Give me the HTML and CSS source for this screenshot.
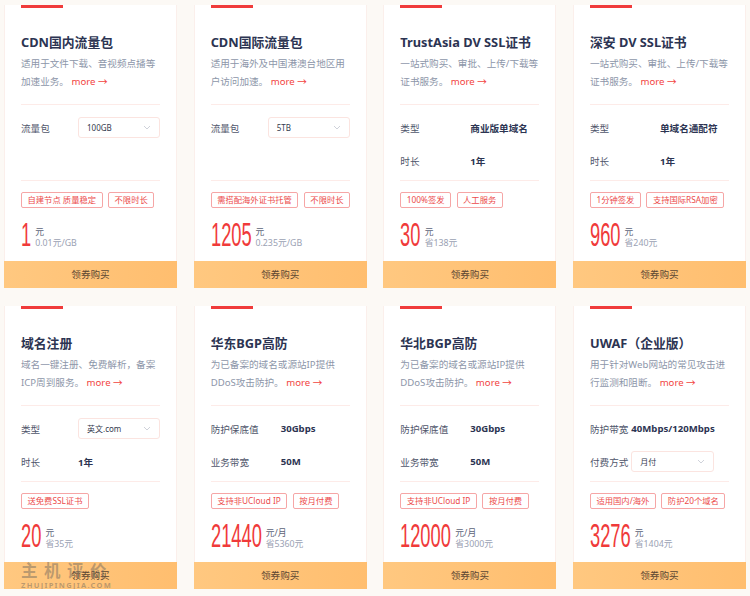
FILE: index.html
```html
<!DOCTYPE html>
<html lang="zh-CN">
<head>
    <meta charset="UTF-8">
    <meta name="viewport" content="width=device-width, initial-scale=1.0">
    <title>热门产品</title>
    <link rel="stylesheet" href="styles.css">
</head>
<body>
    <div class="products">
        <div class="card">
            <div class="card-bar"></div>
            <h3>CDN国内流量包</h3>
            <p class="desc">适用于文件下载、音视频点播等加速业务。 <a class="more" href="#">more →</a></p>
            <div class="params params-select">
                <div class="row"><span class="label">流量包</span><span class="select">100GB<svg width="8" height="5" viewBox="0 0 8 5"><polyline points="1,1 4,4 7,1" fill="none" stroke="#cfd2da" stroke-width="1"/></svg></span></div>
            </div>
            <div class="tags"><span class="tag">自建节点 质量稳定</span><span class="tag">不限时长</span></div>
            <div class="price"><span class="num" style="--n:1"><span>1</span></span><span class="unit"><span>元</span><span class="sub">0.01元/GB</span></span></div>
            <a class="buy" href="#">领券购买</a>
        </div>

        <div class="card">
            <div class="card-bar"></div>
            <h3>CDN国际流量包</h3>
            <p class="desc">适用于海外及中国港澳台地区用户访问加速。 <a class="more" href="#">more →</a></p>
            <div class="params params-select">
                <div class="row"><span class="label">流量包</span><span class="select">5TB<svg width="8" height="5" viewBox="0 0 8 5"><polyline points="1,1 4,4 7,1" fill="none" stroke="#cfd2da" stroke-width="1"/></svg></span></div>
            </div>
            <div class="tags"><span class="tag">需搭配海外证书托管</span><span class="tag">不限时长</span></div>
            <div class="price"><span class="num" style="--n:4"><span>1205</span></span><span class="unit"><span>元</span><span class="sub">0.235元/GB</span></span></div>
            <a class="buy" href="#">领券购买</a>
        </div>

        <div class="card">
            <div class="card-bar"></div>
            <h3>TrustAsia DV SSL证书</h3>
            <p class="desc">一站式购买、审批、上传/下载等证书服务。 <a class="more" href="#">more →</a></p>
            <div class="params">
                <div class="row"><span class="label">类型</span><span class="val">商业版单域名</span></div>
                <div class="row"><span class="label">时长</span><span class="val">1年</span></div>
            </div>
            <div class="tags"><span class="tag">100%签发</span><span class="tag">人工服务</span></div>
            <div class="price"><span class="num" style="--n:2"><span>30</span></span><span class="unit"><span>元</span><span class="sub">省138元</span></span></div>
            <a class="buy" href="#">领券购买</a>
        </div>

        <div class="card">
            <div class="card-bar"></div>
            <h3>深安 DV SSL证书</h3>
            <p class="desc">一站式购买、审批、上传/下载等证书服务。 <a class="more" href="#">more →</a></p>
            <div class="params">
                <div class="row"><span class="label">类型</span><span class="val">单域名通配符</span></div>
                <div class="row"><span class="label">时长</span><span class="val">1年</span></div>
            </div>
            <div class="tags"><span class="tag">1分钟签发</span><span class="tag">支持国际RSA加密</span></div>
            <div class="price"><span class="num" style="--n:3"><span>960</span></span><span class="unit"><span>元</span><span class="sub">省240元</span></span></div>
            <a class="buy" href="#">领券购买</a>
        </div>

        <div class="card">
            <div class="card-bar"></div>
            <h3>域名注册</h3>
            <p class="desc">域名一键注册、免费解析，备案ICP周到服务。 <a class="more" href="#">more →</a></p>
            <div class="params params-select">
                <div class="row"><span class="label">类型</span><span class="select">英文.com<svg width="8" height="5" viewBox="0 0 8 5"><polyline points="1,1 4,4 7,1" fill="none" stroke="#cfd2da" stroke-width="1"/></svg></span></div>
                <div class="row"><span class="label">时长</span><span class="val">1年</span></div>
            </div>
            <div class="tags"><span class="tag">送免费SSL证书</span></div>
            <div class="price"><span class="num" style="--n:2"><span>20</span></span><span class="unit"><span>元</span><span class="sub">省35元</span></span></div>
            <a class="buy" href="#">领券购买</a>
        </div>

        <div class="card">
            <div class="card-bar"></div>
            <h3>华东BGP高防</h3>
            <p class="desc">为已备案的域名或源站IP提供DDoS攻击防护。 <a class="more" href="#">more →</a></p>
            <div class="params">
                <div class="row"><span class="label">防护保底值</span><span class="val">30Gbps</span></div>
                <div class="row"><span class="label">业务带宽</span><span class="val">50M</span></div>
            </div>
            <div class="tags"><span class="tag">支持非UCloud IP</span><span class="tag">按月付费</span></div>
            <div class="price"><span class="num" style="--n:5"><span>21440</span></span><span class="unit"><span>元/月</span><span class="sub">省5360元</span></span></div>
            <a class="buy" href="#">领券购买</a>
        </div>

        <div class="card">
            <div class="card-bar"></div>
            <h3>华北BGP高防</h3>
            <p class="desc">为已备案的域名或源站IP提供DDoS攻击防护。 <a class="more" href="#">more →</a></p>
            <div class="params">
                <div class="row"><span class="label">防护保底值</span><span class="val">30Gbps</span></div>
                <div class="row"><span class="label">业务带宽</span><span class="val">50M</span></div>
            </div>
            <div class="tags"><span class="tag">支持非UCloud IP</span><span class="tag">按月付费</span></div>
            <div class="price"><span class="num" style="--n:5"><span>12000</span></span><span class="unit"><span>元/月</span><span class="sub">省3000元</span></span></div>
            <a class="buy" href="#">领券购买</a>
        </div>

        <div class="card">
            <div class="card-bar"></div>
            <h3>UWAF（企业版）</h3>
            <p class="desc">用于针对Web网站的常见攻击进行监测和阻断。 <a class="more" href="#">more →</a></p>
            <div class="params params-auto">
                <div class="row"><span class="label">防护带宽</span><span class="val">40Mbps/120Mbps</span></div>
                <div class="row"><span class="label">付费方式</span><span class="select">月付<svg width="8" height="5" viewBox="0 0 8 5"><polyline points="1,1 4,4 7,1" fill="none" stroke="#cfd2da" stroke-width="1"/></svg></span></div>
            </div>
            <div class="tags"><span class="tag">适用国内/海外</span><span class="tag">防护20个域名</span></div>
            <div class="price"><span class="num" style="--n:4"><span>3276</span></span><span class="unit"><span>元</span><span class="sub">省1404元</span></span></div>
            <a class="buy" href="#">领券购买</a>
        </div>
    </div>

    <div class="watermark">
        <span class="wm-cn">主机评价</span>
        <span class="wm-en">ZHUJIPINGJIA.COM</span>
    </div>
</body>
</html>
```

FILE: styles.css
```css
body {
    margin: 0;
    font-family: "Noto Sans", "Noto Sans CJK SC", sans-serif;
    background: #fcf9f5;
    color: #2c3452;
    position: relative;
}
.products {
    display: grid;
    grid-template-columns: repeat(4, 173px);
    column-gap: 16.67px;
    row-gap: 18px;
    padding: 5px 0 0 4px;
}
.card {
    height: 283px;
    box-sizing: border-box;
    background: #fff;
    border: 1px solid #fbefeb;
    border-top: none;
    padding: 0 16px;
    display: flex;
    flex-direction: column;
}
.card-bar {
    width: 42px;
    height: 3px;
    background: #f03b3b;
}
.card h3 {
    margin: 25px 0 0;
    font-size: 12.8px;
    line-height: 18px;
    font-weight: 700;
    color: #2c3452;
    white-space: nowrap;
}
.desc {
    margin: 4px -4px 0 0;
    height: 36px;
    font-size: 9.6px;
    line-height: 18px;
    color: #8d96a9;
}
.more {
    color: #f2443f;
    text-decoration: none;
}
.params {
    margin-top: 13px;
    height: 77px;
    box-sizing: border-box;
    border-top: 1px solid #fdebe8;
    border-bottom: 1px solid #fdebe8;
    padding-top: 6px;
}
.row {
    display: flex;
    align-items: center;
    height: 33px;
    font-size: 9.6px;
}
.label {
    width: 57px;
    flex: none;
    color: #4f566b;
}
.val {
    padding-left: 13px;
    font-weight: 700;
    color: #2c3452;
    white-space: nowrap;
}
.params-select .val {
    padding-left: 0;
}
.params-auto .label {
    width: auto;
    margin-right: 3px;
}
.params-auto .val {
    padding-left: 0;
}
.select {
    width: 83px;
    height: 21px;
    box-sizing: border-box;
    border: 1px solid #fbe4e0;
    border-radius: 3px;
    display: flex;
    align-items: center;
    justify-content: space-between;
    padding: 0 8px 0 8px;
    font-size: 8px;
    color: #333a4d;
}
.tags {
    margin-top: 11px;
    display: flex;
    gap: 5.5px;
    height: 16px;
}
.tag {
    box-sizing: border-box;
    height: 16px;
    line-height: 14px;
    padding: 0 5.5px;
    border: 1px solid #f6a6a6;
    border-radius: 2px;
    font-size: 8.3px;
    color: #ec4b4b;
    white-space: nowrap;
}
.price {
    margin-top: 15px;
    height: 24px;
    display: flex;
    align-items: flex-end;
}
.num {
    display: inline-block;
    width: calc(var(--n) * 10.2px);
    height: 24px;
    font-family: "Liberation Sans", sans-serif;
    font-size: 33px;
    line-height: 24px;
    color: #f03a3a;
}
.num span {
    display: inline-block;
    transform: scaleX(0.555);
    transform-origin: 0 0;
    white-space: nowrap;
}
.unit {
    display: flex;
    flex-direction: column;
    margin: 0 0 -1.5px 4px;
    font-size: 8.8px;
    line-height: 11px;
    color: #5c6378;
    white-space: nowrap;
}
.unit .sub {
    color: #9aa1b3;
}
.buy {
    margin: auto -17px -1px;
    height: 27px;
    line-height: 27px;
    text-align: center;
    background: linear-gradient(90deg, #ffc880, #ffbe6f);
    color: #5b4632;
    font-size: 9.6px;
    text-decoration: none;
}
.watermark {
    position: absolute;
    left: 21px;
    top: 561px;
    display: flex;
    flex-direction: column;
    color: rgba(90, 90, 90, 0.42);
    font-weight: 700;
    pointer-events: none;
}
.wm-cn {
    font-size: 16.5px;
    line-height: 20px;
    letter-spacing: 6.5px;
}
.wm-en {
    font-size: 7.5px;
    line-height: 9px;
    letter-spacing: 1.3px;
}
```
